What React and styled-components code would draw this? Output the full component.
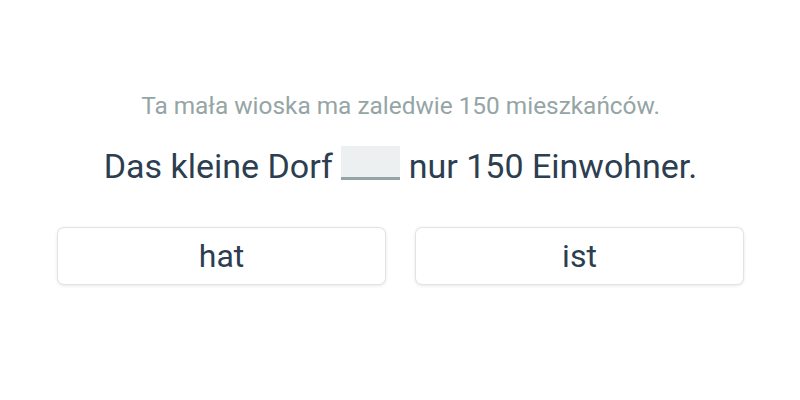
import styled, { createGlobalStyle } from "styled-components";

const GlobalStyle = createGlobalStyle`
  body {
    margin: 0;
    background: #ffffff;
    font-family: Roboto, "Noto Sans", sans-serif;
  }
`;

export default function App() {
  return (
    <>
      <GlobalStyle />
      <Page>
        <Hint>Ta mała wioska ma zaledwie 150 mieszkańców.</Hint>
        <Sentence>
          Das kleine Dorf <Blank /> nur 150 Einwohner.
        </Sentence>
        <Options>
          <Option>hat</Option>
          <Option>ist</Option>
        </Options>
      </Page>
    </>
  );
}

const Page = styled.div`
  width: 800px;
  height: 400px;
  box-sizing: border-box;
  padding: 90px 57px 0 58px;
  display: flex;
  flex-direction: column;
  align-items: center;
`;

const Hint = styled.div`
  font-size: 24.4px;
  line-height: 32px;
  color: #95a5a6;
`;

const Sentence = styled.div`
  margin-top: 22px;
  font-size: 34px;
  line-height: 44px;
  color: #2c3e50;
`;

const Blank = styled.span`
  display: inline-block;
  vertical-align: -2px;
  width: 59px;
  height: 31px;
  background: #ecf0f1;
  border-bottom: 3px solid #95a5a6;
`;

const Options = styled.div`
  margin-top: 40px;
  width: 100%;
  display: grid;
  grid-template-columns: 1fr 1fr;
  gap: 31px;
`;

const Option = styled.button`
  height: 56px;
  border: none;
  border-radius: 6px;
  background: #ffffff;
  box-shadow: 0 0 0 1px #e1e3e4, 0 1px 4px rgba(0, 0, 0, 0.14);
  font-family: Roboto, "Noto Sans", sans-serif;
  font-size: 32px;
  color: #2c3e50;
  cursor: pointer;
`;
